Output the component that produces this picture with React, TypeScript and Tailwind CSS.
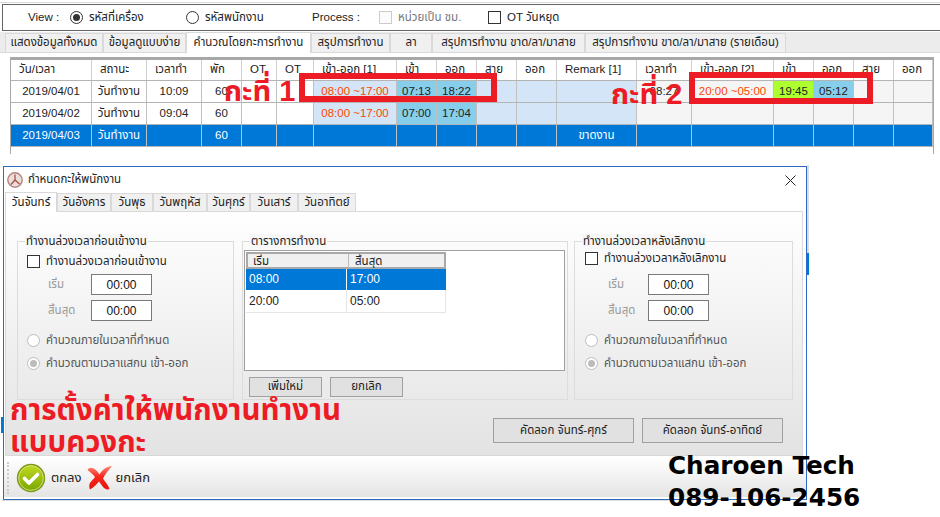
import React from 'react';

const thai = "font-['Liberation_Sans','Noto_Sans_Thai',sans-serif]";

const colGrid =
  'grid grid-cols-[81px_55px_55px_40px_35px_37px_83px_40px_40px_40px_40px_80px_55px_82px_40px_40px_40px_39px]';

const headers = [
  'วัน/เวลา', 'สถานะ', 'เวลาทำ', 'พัก', 'OT', 'OT', 'เข้า-ออก [1]', 'เข้า', 'ออก', 'สาย', 'ออก',
  'Remark [1]', 'เวลาทำ', 'เข้า-ออก [2]', 'เข้า', 'ออก', 'สาย', 'ออก',
];

type Cell = { t?: string; c?: string };

function cell(t?: string, c?: string): Cell {
  return { t, c };
}

const lightBlue = 'bg-[#d3e5f7]';
const sky = 'bg-[#87ceeb]';
const grey = 'bg-[#f5f5f5]';
const red = 'text-[#ff4500]';

const rows: Cell[][] = [
  [
    cell('2019/04/01'), cell('วันทำงาน'), cell('10:09'), cell('60'), cell(), cell(),
    cell('08:00 ~17:00', `${lightBlue} ${red}`), cell('07:13', sky), cell('18:22', sky),
    cell('', lightBlue), cell('', lightBlue), cell('', lightBlue),
    cell('08:27', grey), cell('20:00 ~05:00', `${grey} ${red}`), cell('19:45', 'bg-[#adff2f]'),
    cell('05:12', sky), cell('', grey), cell('', grey),
  ],
  [
    cell('2019/04/02'), cell('วันทำงาน'), cell('09:04'), cell('60'), cell(), cell(),
    cell('08:00 ~17:00', `${lightBlue} ${red}`), cell('07:00', sky), cell('17:04', sky),
    cell('', lightBlue), cell('', lightBlue), cell('', lightBlue),
    cell('', grey), cell('', grey), cell('', grey), cell('', grey), cell('', grey), cell('', grey),
  ],
  [
    cell('2019/04/03'), cell('วันทำงาน'), cell(), cell('60'), cell(), cell(), cell(), cell(), cell(),
    cell(), cell(), cell('ขาดงาน'), cell(), cell(), cell(), cell(), cell(), cell(),
  ],
];

function Radio({ on, disabled }: { on?: boolean; disabled?: boolean }) {
  return (
    <span
      className={`flex h-[13px] w-[13px] shrink-0 items-center justify-center rounded-full border bg-white ${
        disabled ? 'border-[#bcbcbc]' : 'border-[#333]'
      }`}
    >
      {on && <span className={`h-[7px] w-[7px] rounded-full ${disabled ? 'bg-[#bcbcbc]' : 'bg-[#333]'}`} />}
    </span>
  );
}

function Check({ muted }: { muted?: boolean }) {
  return (
    <span className={`block h-[13px] w-[13px] shrink-0 border ${muted ? 'border-[#ccc] bg-[#fbfbfb]' : 'border-[#333] bg-white'}`} />
  );
}

function Toolbar() {
  return (
    <div className="ml-[2px] mt-[1px] flex h-[27px] w-[938px] items-center whitespace-nowrap border border-r-0 border-[#646464] bg-white text-[11.5px] text-[#222]">
      <span className="ml-[25px] w-[42px]">View :</span>
      <Radio on />
      <span className="ml-[6px] w-[97px]">รหัสที่เครื่อง</span>
      <Radio />
      <span className="ml-[6px] w-[107px]">รหัสพนักงาน</span>
      <span className="w-[67px]">Process :</span>
      <Check muted />
      <span className="ml-[6px] w-[90px] text-[#777]">หน่วยเป็น ชม.</span>
      <Check />
      <span className="ml-[6px]">OT วันหยุด</span>
    </div>
  );
}

const mainTabs = [
  { t: 'แสดงข้อมูลทั้งหมด', w: 98 },
  { t: 'ข้อมูลดูแบบง่าย', w: 83 },
  { t: 'คำนวณโดยกะการทำงาน', w: 125, on: true },
  { t: 'สรุปการทำงาน', w: 79 },
  { t: 'ลา', w: 42 },
  { t: 'สรุปการทำงาน ขาด/ลา/มาสาย', w: 153 },
  { t: 'สรุปการทำงาน ขาด/ลา/มาสาย (รายเดือน)', w: 201 },
];

function MainTabs() {
  return (
    <div className="mt-[1px] flex h-[21px] items-end border-b border-[#d9d9d9] bg-[#ececec] pl-[5px] text-[11.5px] text-[#222]">
      {mainTabs.map((tab) => (
        <div
          key={tab.t}
          style={{ width: tab.w }}
          className={`flex shrink-0 items-center justify-center whitespace-nowrap border border-b-0 border-[#d9d9d9] ${
            tab.on ? 'relative z-10 -mb-px h-[21px] bg-white' : 'h-[19px] bg-[#f0f0f0]'
          }`}
        >
          {tab.t}
        </div>
      ))}
    </div>
  );
}

function ScheduleGrid() {
  return (
    <div className="ml-[10px] mt-[4px] h-[97px] w-[924px] border-x border-t-[3px] border-x-[#a8a8a8] border-t-[#a8a8a8] bg-white text-[11.5px] text-[#222]">
      <div className={`${colGrid} h-[21px] border-b border-[#b4b4b4]`}>
        {headers.map((h, i) => (
          <div key={i} className="flex items-center whitespace-nowrap border-r border-[#d0d0d0] pl-[8px]">
            {h}
          </div>
        ))}
      </div>
      {rows.map((row, r) => (
        <div
          key={r}
          className={`${colGrid} h-[22px] border-b border-[#b4b4b4] ${r === 2 ? 'bg-[#0078d7] text-white' : ''}`}
        >
          {row.map((c, i) => (
            <div
              key={i}
              className={`flex items-center justify-center whitespace-nowrap border-r border-[#c0c0c0] ${c.c ?? ''}`}
            >
              {c.t}
            </div>
          ))}
        </div>
      ))}
    </div>
  );
}

function ClockIcon() {
  return (
    <svg width="16" height="16" viewBox="0 0 16 16">
      <circle cx="8" cy="8" r="7.2" fill="#eadfdc" stroke="#b9837a" strokeWidth="1.4" />
      <path d="M8 2.5V8L4 12.5M8 8l4.5 4" fill="none" stroke="#a8463c" strokeWidth="1.2" />
    </svg>
  );
}

const dayTabs = [
  { t: 'วันจันทร์', w: 52, on: true },
  { t: 'วันอังคาร', w: 54 },
  { t: 'วันพุธ', w: 42 },
  { t: 'วันพฤหัส', w: 54 },
  { t: 'วันศุกร์', w: 43 },
  { t: 'วันเสาร์', w: 48 },
  { t: 'วันอาทิตย์', w: 58 },
];

function TimeBox() {
  return (
    <span className="flex h-[21px] w-[61px] items-center justify-center border border-[#7a7a7a] bg-white text-[12px] text-[#111]">
      00:00
    </span>
  );
}

function OvertimeGroup({
  title,
  width,
  pad,
  checkPad,
  labelPad,
}: {
  title: string;
  width: string;
  pad: string;
  checkPad: string;
  labelPad: string;
}) {
  return (
    <div className={`relative h-[159px] ${width} border border-[#dcdcdc]`}>
      <span className="absolute -top-[8px] left-[7px] whitespace-nowrap bg-[#f7f7f7] px-[1px] text-[11.5px] leading-[15px] text-[#222]">
        {title}
      </span>
      <div className={`flex h-full flex-col ${pad}`}>
        <div className={`flex h-[32px] items-start gap-[6px] text-[11.5px] leading-[13px] text-[#222] ${checkPad}`}>
          <Check />
          <span className="whitespace-nowrap">{title}</span>
        </div>
        <div className="flex h-[21px] items-center text-[11.5px] text-[#9a9a9a]">
          <span className={labelPad}>เริ่ม</span>
          <TimeBox />
        </div>
        <div className="mt-[5px] flex h-[21px] items-center text-[11.5px] text-[#9a9a9a]">
          <span className={labelPad}>สิ้นสุด</span>
          <TimeBox />
        </div>
        <label className="mt-[13px] flex h-[13px] items-center gap-[6px] whitespace-nowrap text-[11.5px] text-[#555]">
          <Radio disabled />
          คำนวณภายในเวลาที่กำหนด
        </label>
        <label className="mt-[10px] flex h-[13px] items-center gap-[6px] whitespace-nowrap text-[11.5px] text-[#555]">
          <Radio on disabled />
          คำนวณตามเวลาแสกน เข้า-ออก
        </label>
      </div>
    </div>
  );
}

function GreyButton({ label, w, h }: { label: string; w: string; h: string }) {
  return (
    <span className={`flex items-center justify-center border border-[#a0a0a0] bg-[#e1e1e1] text-[11.5px] text-[#222] ${w} ${h}`}>
      {label}
    </span>
  );
}

function TimetableGroup() {
  return (
    <div className="relative h-[159px] w-[326px] border border-[#dcdcdc] pl-[1px] pt-[8px]">
      <span className="absolute -top-[8px] left-[7px] bg-[#f7f7f7] px-[1px] text-[11.5px] leading-[15px] text-[#222]">ตารางการทำงาน</span>
      <div className="h-[121px] w-[321px] border border-[#a0a0a0] bg-white pl-[1px] pt-[1px] text-[12px] text-[#222]">
        <div className="grid h-[17px] w-[200px] grid-cols-[100px_100px] border-2 border-[#a8a8a8] bg-[#f0f0f0] text-[11.5px] leading-[14px]">
          <span className="pl-[5px]">เริ่ม</span>
          <span className="border-l border-[#bbb] pl-[6px]">สิ้นสุด</span>
        </div>
        <div className="grid h-[21px] w-[200px] grid-cols-[100px_100px] bg-[#0078d7] leading-[21px] text-white">
          <span className="pl-[3px]">08:00</span>
          <span className="border-l border-white pl-[3px]">17:00</span>
        </div>
        <div className="grid h-[23px] w-[200px] grid-cols-[100px_100px] border-b border-r border-[#e5e5e5] leading-[22px]">
          <span className="pl-[3px]">20:00</span>
          <span className="border-l border-[#e5e5e5] pl-[3px]">05:00</span>
        </div>
      </div>
      <div className="ml-[5px] mt-[6px] flex gap-[8px]">
        <GreyButton label="เพิ่มใหม่" w="w-[73px]" h="h-[20px]" />
        <GreyButton label="ยกเลิก" w="w-[73px]" h="h-[20px]" />
      </div>
    </div>
  );
}

function OkIcon() {
  return (
    <svg width="30" height="30" viewBox="0 0 30 30">
      <defs>
        <linearGradient id="okFill" x1="0" y1="0" x2="0" y2="1">
          <stop offset="0" stopColor="#c0d820" />
          <stop offset="1" stopColor="#7aa800" />
        </linearGradient>
      </defs>
      <circle cx="15" cy="15" r="14.2" fill="#7d9a10" />
      <circle cx="15" cy="15" r="12.4" fill="url(#okFill)" stroke="#dfe9a0" strokeWidth="0.8" />
      <path d="M8.5 15.5l4.5 4.5 8.5-8.5" fill="none" stroke="#fff" strokeWidth="3.6" strokeLinecap="round" strokeLinejoin="round" />
    </svg>
  );
}

function CancelIcon() {
  return (
    <svg width="25" height="25" viewBox="0 0 25 25">
      <defs>
        <linearGradient id="noFill" x1="0" y1="0" x2="0" y2="1">
          <stop offset="0" stopColor="#ff8a78" />
          <stop offset="0.45" stopColor="#f8271c" />
          <stop offset="1" stopColor="#e5140c" />
        </linearGradient>
      </defs>
      <path
        d="M0.5 5C3 1 8 2 12.5 9.500C15 5 20 1 25 1C22 5 18 9 16 13.500C18 17 21.500 20 22.500 24C20 25 18 24 16 22L12 16.500C9 20 6 23 3 24.500C2 22 2 20 3 18C5 15 7 13.500 8 12C6 9 3 7 0.500 5Z"
        fill="url(#noFill)"
      />
    </svg>
  );
}

function Dialog() {
  return (
    <div className={`absolute left-[3px] top-[166px] flex h-[334px] w-[804px] flex-col border border-[#2b6cc4] bg-white ${thai}`}>
      {/* Title */}
      <div className="flex h-[25px] shrink-0 items-center pl-[3px] pt-[1px] text-[11.5px] text-[#222]">
        <ClockIcon />
        <span className="ml-[5px]">กำหนดกะให้พนักงาน</span>
        <svg className="ml-auto mr-[10px]" width="11" height="11" viewBox="0 0 11 11">
          <path d="M.5.5l10 10M10.5.5l-10 10" stroke="#222" strokeWidth="1" />
        </svg>
      </div>
      {/* Day tabs */}
      <div className="ml-[1px] mr-[3px] flex h-[20px] shrink-0 items-end border-b border-[#d9d9d9] text-[11.5px] text-[#222]">
        {dayTabs.map((d) => (
          <div
            key={d.t}
            style={{ width: d.w }}
            className={`flex shrink-0 items-center justify-center border border-b-0 border-[#d9d9d9] ${
              d.on ? 'relative z-10 -mb-px h-[20px] bg-white' : 'h-[18px] bg-[#f0f0f0]'
            }`}
          >
            {d.t}
          </div>
        ))}
      </div>
      {/* Page body */}
      <div className="relative ml-[1px] mr-[3px] h-[244px] shrink-0 border-x border-b border-[#d9d9d9] bg-gradient-to-b from-white to-[#e3e3e3]">
        <div className="flex pl-[11px] pt-[29px]">
          <OvertimeGroup
            title="ทำงานล่วงเวลาก่อนเข้างาน"
            width="w-[217px]"
            pad="pl-[9px]"
            checkPad="pt-[13px]"
            labelPad="ml-[21px] w-[43px]"
          />
          <div className="ml-[8px]">
            <TimetableGroup />
          </div>
          <div className="ml-[6px]">
            <OvertimeGroup
              title="ทำงานล่วงเวลาหลังเลิกงาน"
              width="w-[219px]"
              pad="pl-[10px]"
              checkPad="pt-[10px]"
              labelPad="ml-[23px] w-[40px]"
            />
          </div>
        </div>
        <div className="mt-[18px] flex justify-end gap-[8px] pr-[19px]">
          <GreyButton label="คัดลอก จันทร์-ศุกร์" w="w-[141px]" h="h-[25px]" />
          <GreyButton label="คัดลอก จันทร์-อาทิตย์" w="w-[141px]" h="h-[25px]" />
        </div>
        <div className="absolute left-[4px] top-[182px] whitespace-nowrap text-[29.5px] font-bold leading-[32px] text-[#ed1c24]">
          การตั้งค่าให้พนักงานทำงาน
          <br />
          แบบควงกะ
        </div>
      </div>
      {/* Footer */}
      <div className="mt-[2px] flex h-[39px] shrink-0 items-center bg-gradient-to-b from-white to-[#e4e4e4] pl-[3px] text-[13px] text-[#222]">
        <span className="mr-[6px] h-[32px] w-[3px] border-l-2 border-dotted border-[#ccc]" />
        <OkIcon />
        <span className="ml-[5px]">ตกลง</span>
        <span className="ml-[6px]"><CancelIcon /></span>
        <span className="ml-[3px]">ยกเลิก</span>
      </div>
    </div>
  );
}

export default function App() {
  return (
    <div className={`relative h-[517px] w-[940px] overflow-hidden bg-white ${thai}`}>
      <div className="h-[3px] border-b border-[#d8d8d8]" />
      <Toolbar />
      <MainTabs />
      <ScheduleGrid />

      {/* Slivers of the window behind the dialog */}
      <div className="absolute left-[807px] top-[165px] h-[110px] w-[2px] bg-[#dcdcdc]" />
      <div className="absolute left-[807px] top-[253px] h-[22px] w-[2px] bg-[#0078d7]" />
      <div className="absolute left-[1px] top-[417px] h-[16px] w-[2px] bg-[#0078d7]" />
      <div className="absolute left-[2px] top-[500px] h-[1px] w-[666px] bg-[#dcdcdc]" />

      <Dialog />

      {/* Annotations drawn over the screenshot */}
      <div className="absolute left-[299px] top-[73px] h-[29px] w-[198px] border-[6px] border-[#ed1c24]" />
      <div className="absolute left-[689px] top-[72px] h-[32px] w-[184px] border-[6px] border-[#ed1c24]" />
      <span className="absolute left-[224px] top-[73px] text-[29px] font-bold leading-[36px] text-[#ed1c24]">กะที่ 1</span>
      <span className="absolute left-[611px] top-[76px] text-[29px] font-bold leading-[36px] text-[#ed1c24]">กะที่ 2</span>
      <div className="absolute left-[668px] top-[450px] whitespace-nowrap font-['DejaVu_Sans',sans-serif] text-[24.7px] font-bold leading-[32px] text-black">
        Charoen Tech
        <br />
        089-106-2456
      </div>
    </div>
  );
}
